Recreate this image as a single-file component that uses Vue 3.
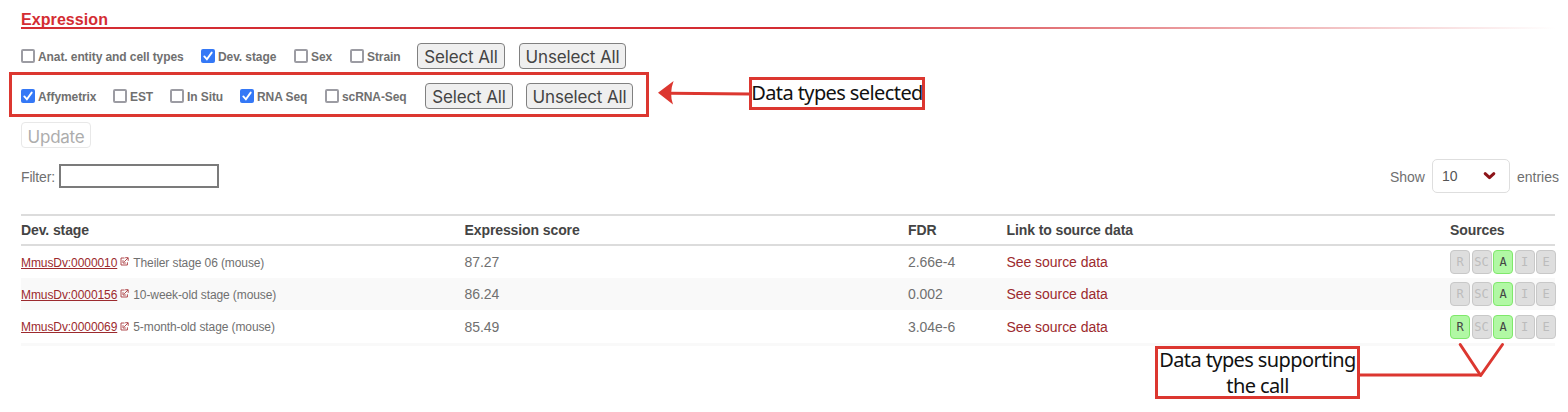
<script setup>
const conditions = [
  { label: 'Anat. entity and cell types', checked: false },
  { label: 'Dev. stage', checked: true },
  { label: 'Sex', checked: false },
  { label: 'Strain', checked: false },
]
const dataTypes = [
  { label: 'Affymetrix', checked: true },
  { label: 'EST', checked: false },
  { label: 'In Situ', checked: false },
  { label: 'RNA Seq', checked: true },
  { label: 'scRNA-Seq', checked: false },
]
const sources = ['R', 'SC', 'A', 'I', 'E']
const rows = [
  { id: 'MmusDv:0000010', name: 'Theiler stage 06 (mouse)', score: '87.27', fdr: '2.66e-4', on: ['A'] },
  { id: 'MmusDv:0000156', name: '10-week-old stage (mouse)', score: '86.24', fdr: '0.002', on: ['A'] },
  { id: 'MmusDv:0000069', name: '5-month-old stage (mouse)', score: '85.49', fdr: '3.04e-6', on: ['R', 'A'] },
]
</script>

<template>
  <main class="page">
    <h2 class="title">Expression</h2>
    <div class="rule"></div>

    <div class="options conditions">
      <label v-for="c in conditions" :key="c.label" class="option">
        <span class="box" :class="{ checked: c.checked }">
          <svg v-if="c.checked" viewBox="0 0 14 14"><path d="M3.3 7.4 L5.9 10.3 L10.7 3.6" /></svg>
        </span>
        <span class="label">{{ c.label }}</span>
      </label>
      <button class="btn">Select All</button>
      <button class="btn">Unselect All</button>
    </div>

    <div class="options types">
      <label v-for="c in dataTypes" :key="c.label" class="option">
        <span class="box" :class="{ checked: c.checked }">
          <svg v-if="c.checked" viewBox="0 0 14 14"><path d="M3.3 7.4 L5.9 10.3 L10.7 3.6" /></svg>
        </span>
        <span class="label">{{ c.label }}</span>
      </label>
      <button class="btn">Select All</button>
      <button class="btn">Unselect All</button>
    </div>

    <button class="btn update" disabled>Update</button>

    <div class="controls">
      <div class="filter"><span>Filter:</span><span class="input"></span></div>
      <div class="length">
        <span>Show</span>
        <span class="select">10
          <svg viewBox="0 0 12 9"><path d="M2 2.4 L6 6 L10 2.4" /></svg>
        </span>
        <span>entries</span>
      </div>
    </div>

    <section class="table">
      <div class="row head">
        <span>Dev. stage</span><span>Expression score</span><span>FDR</span><span>Link to source data</span><span>Sources</span>
      </div>
      <div v-for="r in rows" :key="r.id" class="row">
        <span class="stage">
          <a class="id">{{ r.id }}</a>
          <svg class="ext" viewBox="0 0 9 9"><path d="M4.5 1 H1 V8 H7.4 V5.3 M5.2 .7 H8.2 V3.8 M8 1 L4.2 4.8 M3 3.2 V6 H5.8" /></svg>
          <span class="name">{{ r.name }}</span>
        </span>
        <span>{{ r.score }}</span>
        <span>{{ r.fdr }}</span>
        <a class="link">See source data</a>
        <span class="badges">
          <i v-for="s in sources" :key="s" class="badge" :class="{ on: r.on.includes(s) }">{{ s }}</i>
        </span>
      </div>
      <div class="strip"></div>
    </section>

    <svg class="arrows" viewBox="0 0 1568 412">
      <path class="line" d="M670 93.2 L750 94" />
      <path class="tip" d="M658 92.7 L673.6 81 Q669 93 673 104.6 Z" />
      <path class="line" d="M1359 375 H1481" />
      <path class="line fork" d="M1460.2 344.5 L1480.7 375.5 L1502.5 344.5" />
    </svg>
    <div class="note selected"><span>Data types selected</span></div>
    <div class="note supporting"><span>Data types supporting</span><span>the call</span></div>
  </main>
</template>

<style>
body { background: #fff; }
</style>

<style scoped>
.page {
  position: relative;
  box-sizing: border-box;
  width: 1568px;
  height: 412px;
  overflow: hidden;
  padding: 9px 0 0 21px;
  font-family: "Liberation Sans", Arial, sans-serif;
  color: #707070;
}
.title {
  margin: 0;
  height: 18px;
  font-size: 16px;
  line-height: 21px;
  letter-spacing: 0.08px;
  color: #d42d33;
}
.rule {
  height: 2px;
  width: 1535px;
  background: linear-gradient(to right, #d42d33 0%, #d42d33 50%, #fff 100%);
}
.options {
  display: grid;
  align-items: center;
  box-sizing: border-box;
}
.conditions {
  grid-template-columns: 180px 93px 56px 67px 102px 107px;
  height: 26px;
  margin-top: 14px;
}
.types {
  grid-template-columns: 92px 57px 70px 85px 100px 101px 108px;
  width: 640px;
  height: 45px;
  margin: 3px 0 0 -12px;
  padding: 2px 0 0 9px;
  border: 3px solid #dc3730;
}
.option {
  display: flex;
  align-items: center;
  gap: 3px;
  font-size: 12px;
  font-weight: bold;
  letter-spacing: -0.09px;
  white-space: nowrap;
}
.label { padding-top: 2px; }
.box {
  box-sizing: border-box;
  flex: none;
  width: 14px;
  height: 14px;
  border: 2px solid #9c9ca3;
  border-radius: 2px;
}
.box.checked {
  border: 0;
  background: #3478f6;
}
.box svg { display: block; width: 14px; height: 14px; }
.box path { fill: none; stroke: #fff; stroke-width: 1.9; stroke-linecap: round; }
.btn {
  box-sizing: border-box;
  justify-self: start;
  width: 88px;
  height: 26px;
  padding: 2px 0 0;
  border: 1px solid #808080;
  border-radius: 4px;
  background: #efefef;
  color: #444;
  font: 17px/22px Inter, sans-serif;
  letter-spacing: -0.13px;
  white-space: nowrap;
}
.btn + .btn { width: 107px; }
.btn.update {
  display: block;
  width: 70px;
  padding-top: 3px;
  margin-top: 5px;
  border-color: #e8e8e8;
  background: #fff;
  color: #adadad;
  letter-spacing: -0.25px;
}
.controls {
  display: flex;
  justify-content: space-between;
  align-items: center;
  height: 34px;
  margin: 11px 9px 0 0;
  font-size: 14px;
}
.filter, .length { display: flex; align-items: center; }
.filter span:first-child { width: 34px; padding-top: 2px; letter-spacing: -0.15px; white-space: nowrap; }
.filter { gap: 4px; }
.input {
  box-sizing: border-box;
  width: 160px;
  height: 24px;
  border: 2px solid #7b7b7b;
}
.length { gap: 7px; padding-top: 1px; }
.select {
  box-sizing: border-box;
  display: flex;
  align-items: center;
  justify-content: space-between;
  width: 78px;
  height: 34px;
  padding: 0 13px 0 9px;
  margin-top: -1px;
  border: 1px solid #dedede;
  border-radius: 5px;
  color: #555;
}
.select svg { width: 13px; height: 10px; }
.select path { fill: none; stroke: #8d1418; stroke-width: 2.8; stroke-linecap: round; stroke-linejoin: round; }
.table { width: 1534px; margin-top: 21px; }
.row {
  display: grid;
  grid-template-columns: 443.5px 443.5px 98.5px 443.5px 105.5px;
  align-items: center;
  height: 32px;
  font-size: 14px;
  letter-spacing: -0.05px;
  white-space: nowrap;
}
.row:nth-child(odd) { background: #f9f9f9; }
.row:nth-child(4) { height: 33px; }
.row.head {
  box-sizing: border-box;
  height: 32px;
  border-top: 2px solid #dcdcdc;
  border-bottom: 2px solid #dcdcdc;
  background: #fff;
  font-weight: bold;
  letter-spacing: -0.1px;
  color: #444;
}
.stage { display: flex; align-items: center; padding-top: 1px; font-size: 12px; letter-spacing: -0.08px; }
.id { text-decoration: underline; color: #9c2a2e; }
.name { letter-spacing: -0.1px; }
.ext { width: 9px; height: 9px; margin: -2px 4px 0 3px; }
.ext path { fill: none; stroke: #a8383c; stroke-width: 0.9; }
.link { color: #9c2a2e; }
.badges { display: flex; gap: 1.5px; }
.badge {
  box-sizing: border-box;
  flex: none;
  width: 20px;
  height: 24px;
  border: 1px solid #c8c8c8;
  border-radius: 4px;
  background: #dedede;
  color: #bcbcbc;
  font: 12px/23px "DejaVu Sans Mono", monospace;
  text-align: center;
}
.badge.on { border-color: #7fe86b; background: #b1f8a4; color: #444; }
.strip { height: 3px; background: #f9f9f9; }
.arrows { position: absolute; inset: 0; width: 1568px; height: 412px; }
.line { fill: none; stroke: #dc3730; stroke-width: 3; }
.fork { stroke-linecap: round; stroke-linejoin: round; }
.tip { fill: #dc3730; }
.note {
  position: absolute;
  box-sizing: border-box;
  display: flex;
  flex-direction: column;
  align-items: center;
  border: 3px solid #dc3730;
  background: #fff;
  color: #111;
  font: 20px/26px "Noto Sans", sans-serif;
  letter-spacing: -0.6px;
  white-space: nowrap;
}
.selected { left: 749px; top: 77px; width: 176px; height: 33px; }
.supporting { left: 1155px; top: 346px; width: 205px; height: 53px; }
.supporting span { margin: -2px 0 2px; }
</style>
